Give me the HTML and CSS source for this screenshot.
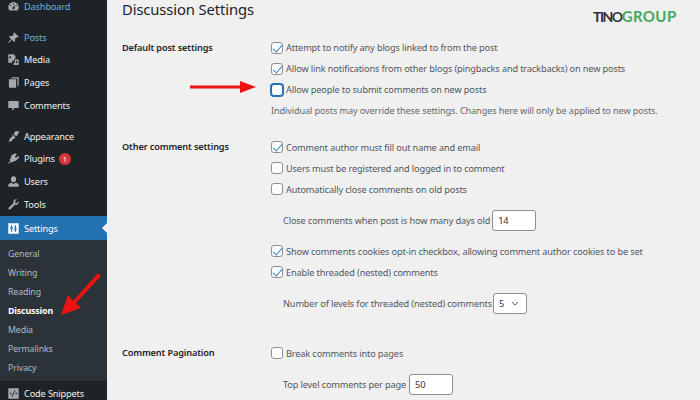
FILE: index.html
```html
<!DOCTYPE html>
<html lang="en">
<head>
<meta charset="utf-8">
<title>Discussion Settings</title>
<link rel="stylesheet" href="styles.css">
</head>
<body>
<div class="page">
  <nav class="side">
    <ul class="menu">
      <li class="item blue gap"><svg class="ico" viewBox="0 0 20 20"><path d="M10 3a8 8 0 0 0-8 8c0 2 .7 3.700 2 5h12c1.300-1.300 2-3 2-5a8 8 0 0 0-8-8zm0 2a1 1 0 1 1 0 2 1 1 0 0 1 0-2zM5.500 7a1 1 0 1 1 0 2 1 1 0 0 1 0-2zm9 0a1 1 0 1 1 0 2 1 1 0 0 1 0-2zM10 14.500a1.800 1.800 0 0 1-1-3.300L13 8l-1.500 4.700A1.800 1.800 0 0 1 10 14.500z"/></svg>Dashboard</li>
      <li class="item blue"><svg class="ico" viewBox="0 0 20 20"><path d="M11 2l7 7-1.500 1-1.500-.5-3 3 .5 3L11 17l-3.500-3.500L3 18l-1 0 0-1 4.500-4.500L3 9l1.500-1.500 3 .5 3-3L10 3.500z"/></svg>Posts</li>
      <li class="item"><svg class="ico" viewBox="0 0 20 20"><path d="M2 2h9v2h2v5h-2v3H8v3H2zm3 3a1.500 1.500 0 1 0 0 3 1.500 1.500 0 0 0 0-3zm7 5h6v7a2 2 0 1 1-2-2V12h-2v5a2 2 0 1 1-2-2z"/></svg>Media</li>
      <li class="item"><svg class="ico" viewBox="0 0 20 20"><path d="M7 2h11v13h-2V4H7zM3 5h11v13H3z"/></svg>Pages</li>
      <li class="item gap"><svg class="ico" viewBox="0 0 20 20"><path d="M3 3h14a1 1 0 0 1 1 1v9a1 1 0 0 1-1 1h-5l-4 4v-4H3a1 1 0 0 1-1-1V4a1 1 0 0 1 1-1z"/></svg>Comments</li>
      <li class="item"><svg class="ico" viewBox="0 0 20 20"><path d="M13 2l6-0-3 6-2 2-4-4zM8.500 7l4.500 4.500-2.500 2.500c-2 .5-2.500 1.500-3 3-.8 1-3.500 1-5.500.5 2-1 1.500-3 2.500-4.500 1-1.500 2.500-1.500 3.500-2.500-.5-1 .2-1.800.5-3.500z"/></svg>Appearance</li>
      <li class="item"><svg class="ico" viewBox="0 0 20 20"><path d="M13 2l2 2-3 3 2 2 3-3 2 2-3 3c-1 2-3 3-5 3l-3 2-2-1-3 3-1-1 3-3-1-2 2-3c0-2 1-4 3-5z"/></svg>Plugins<span class="badge">1</span></li>
      <li class="item"><svg class="ico" viewBox="0 0 20 20"><path d="M10 2a4 4 0 0 1 4 4v1a4 4 0 0 1-8 0V6a4 4 0 0 1 4-4zM7 12l3 2 3-2c3 .5 5 2 5 3.500V18H2v-2.500C2 14 4 12.500 7 12z"/></svg>Users</li>
      <li class="item"><svg class="ico" viewBox="0 0 20 20"><path d="M18 5l-3 3-2-.5L12.500 5l3-3c-2-.5-4 0-5 1.500-1 1.500-1 3-.5 4L2.500 15a1.800 1.800 0 0 0 2.500 2.500L12.500 10c1 .5 2.500.5 4-.5 1.500-1 2-3 1.500-4.500z"/></svg>Tools</li>
      <li class="item current"><svg class="ico" viewBox="0 0 20 20"><path fill-rule="evenodd" d="M2 2h16v16H2zm4 3v3H5v2h1v5h2v-5h1V8H8V5zm6 0v5h-1v2h1v3h2v-3h1v-2h-1V5z"/></svg>Settings</li>
      <li>
        <ul class="sub">
          <li class="sub-item">General</li>
          <li class="sub-item">Writing</li>
          <li class="sub-item">Reading</li>
          <li class="sub-item active">Discussion</li>
          <li class="sub-item">Media</li>
          <li class="sub-item">Permalinks</li>
          <li class="sub-item">Privacy</li>
        </ul>
      </li>
      <li class="item"><svg class="ico" viewBox="0 0 20 20"><path fill-rule="evenodd" d="M2 2h16v16H2zm9.500 3L7 15h1.500L13 5zM6.500 8L4 10l2.500 2zm7 0v4L16 10z"/></svg>Code Snippets</li>
    </ul>
  </nav>
  <main class="main">
    <h1 class="title">Discussion Settings</h1>

    <section class="group">
      <h2 class="label">Default post settings</h2>
      <div class="fields">
        <div class="opt"><span class="cb on"></span>Attempt to notify any blogs linked to from the post</div>
        <div class="opt"><span class="cb on"></span>Allow link notifications from other blogs (pingbacks and trackbacks) on new posts</div>
        <div class="opt"><span class="cb focus"></span>Allow people to submit comments on new posts</div>
        <div class="opt desc">Individual posts may override these settings. Changes here will only be applied to new posts.</div>
      </div>
    </section>

    <section class="group second">
      <h2 class="label">Other comment settings</h2>
      <div class="fields">
        <div class="opt"><span class="cb on"></span>Comment author must fill out name and email</div>
        <div class="opt"><span class="cb"></span>Users must be registered and logged in to comment</div>
        <div class="opt"><span class="cb"></span>Automatically close comments on old posts</div>
        <div class="opt subopt">Close comments when post is how many days old<span class="input days">14</span></div>
        <div class="opt"><span class="cb on"></span>Show comments cookies opt-in checkbox, allowing comment author cookies to be set</div>
        <div class="opt"><span class="cb on"></span>Enable threaded (nested) comments</div>
        <div class="opt subopt">Number of levels for threaded (nested) comments<span class="select">5<svg class="chev" viewBox="0 0 10 6"><path d="M1 1l4 4 4-4"/></svg></span></div>
      </div>
    </section>

    <section class="group third">
      <h2 class="label">Comment Pagination</h2>
      <div class="fields">
        <div class="opt"><span class="cb"></span>Break comments into pages</div>
        <div class="opt subopt">Top level comments per page<span class="input">50</span></div>
      </div>
    </section>
  </main>

  <div class="logo"><span class="tino">TINO</span><span class="grp">GROUP</span></div>

  <svg class="arrow arrow-a" viewBox="0 0 66 12"><path d="M0 4.500h50V0l16 6-16 6V7.500H0z"/></svg>
  <svg class="arrow arrow-b" viewBox="0 0 40 42"><path d="M37 0l3 3L15 30l5 5L0 42l7-20 5 6z"/></svg>
</div>
</body>
</html>
```
FILE: styles.css
```css
* { box-sizing: border-box; }
html, body { margin: 0; padding: 0; }
body {
  width: 700px;
  height: 400px;
  overflow: hidden;
  background: #f0f0f1;
  font-family: "Noto Sans", "Open Sans", sans-serif;
  font-size: 9.2px;
  letter-spacing: -0.14px;
  color: #50575e;
}
.page {
  position: relative;
  display: flex;
  width: 700px;
  height: 400px;
  overflow: hidden;
}
ul { list-style: none; margin: 0; padding: 0; }

/* sidebar */
.side {
  flex: 0 0 107px;
  background: #1d2327;
  color: #f0f0f1;
}
.menu { margin-top: -5.5px; }
.item {
  display: flex;
  align-items: center;
  height: 22.75px;
  padding: 1px 0 0 7px;
  gap: 4px;
  position: relative;
}
.item.gap { margin-bottom: 8px; }
.item.blue { color: #72aee6; }
.ico { width: 13px; height: 13px; fill: #a7aaad; flex: none; }
.item.current {
  height: 24px;
  background: #2271b1;
  color: #fff;
  margin-top: .5px;
}
.item.current .ico { fill: #fff; }
.item.current::after {
  content: "";
  position: absolute;
  right: 0;
  top: 7px;
  border: 5px solid transparent;
  border-right-color: #f0f0f1;
  border-left-width: 0;
}
.badge {
  width: 12px;
  height: 12px;
  border-radius: 50%;
  background: #d63638;
  color: #fff;
  font-size: 7.5px;
  line-height: 12px;
  text-align: center;
}
.sub {
  background: #2c3338;
  padding: 5px 0 3.5px;
  color: #b4b9be;
}
.sub-item {
  height: 19px;
  line-height: 19px;
  padding-left: 8px;
  font-size: 8.8px;
}
.sub-item.active { color: #fff; font-weight: 700; }

/* content */
.main { flex: 1; padding-left: 15px; }
.title {
  margin: 0 0 19px;
  font-size: 14.8px;
  letter-spacing: -0.12px;
  line-height: 18px;
  font-weight: 400;
  color: #1d2327;
}
.group { display: flex; }
.second { margin-top: 15.5px; }
.third { margin-top: 29px; }
.label {
  flex: 0 0 149px;
  margin: 0;
  font-size: 9.2px;
  line-height: 21px;
  font-weight: 600;
  color: #1d2327;
}
.second .label, .third .label { line-height: 19.5px; }
.fields { flex: 1; }
.opt {
  display: flex;
  align-items: center;
  height: 21px;
  white-space: nowrap;
}
.desc { color: #646970; }
.subopt { margin: 10px 0; padding-left: 12px; }
.subopt:last-child { margin-bottom: 0; }
.cb {
  width: 12px;
  height: 12px;
  margin-right: 3px;
  flex: none;
  background: #fff;
  border: 1px solid #8c8f94;
  border-radius: 3px;
  position: relative;
}
.cb.focus { border-color: #2271b1; box-shadow: 0 0 0 1px #2271b1; }
.cb.on::after {
  content: "";
  position: absolute;
  left: 3px;
  top: 0;
  width: 4px;
  height: 8px;
  border: solid #2f80d0;
  border-width: 0 1.5px 1.5px 0;
  transform: rotate(40deg);
}
.input, .select {
  display: flex;
  align-items: center;
  height: 21px;
  margin-left: 3px;
  background: #fff;
  border: 1px solid #8c8f94;
  border-radius: 3px;
  color: #2c3338;
  padding-left: 5px;
}
.input { width: 44px; }
.input.days { margin-left: 2px; }
.select { width: 34px; gap: 7px; margin-left: 1px; }
.chev { width: 8px; height: 5px; fill: none; stroke: #50575e; stroke-width: 1.2; }

/* overlays */
.logo {
  position: absolute;
  left: 593px;
  top: 6px;
  font-family: "Lato", sans-serif;
  line-height: 20px;
  font-weight: 700;
  white-space: nowrap;
}
.tino { color: #333; font-size: 14px; letter-spacing: -1.5px; }
.grp { color: #44a857; font-size: 15px; letter-spacing: .4px; }
.arrow { position: absolute; fill: #ee1111; }
.arrow-a { left: 190px; top: 81px; width: 66px; height: 12px; }
.arrow-b { left: 61px; top: 273px; width: 40px; height: 42px; }
```
